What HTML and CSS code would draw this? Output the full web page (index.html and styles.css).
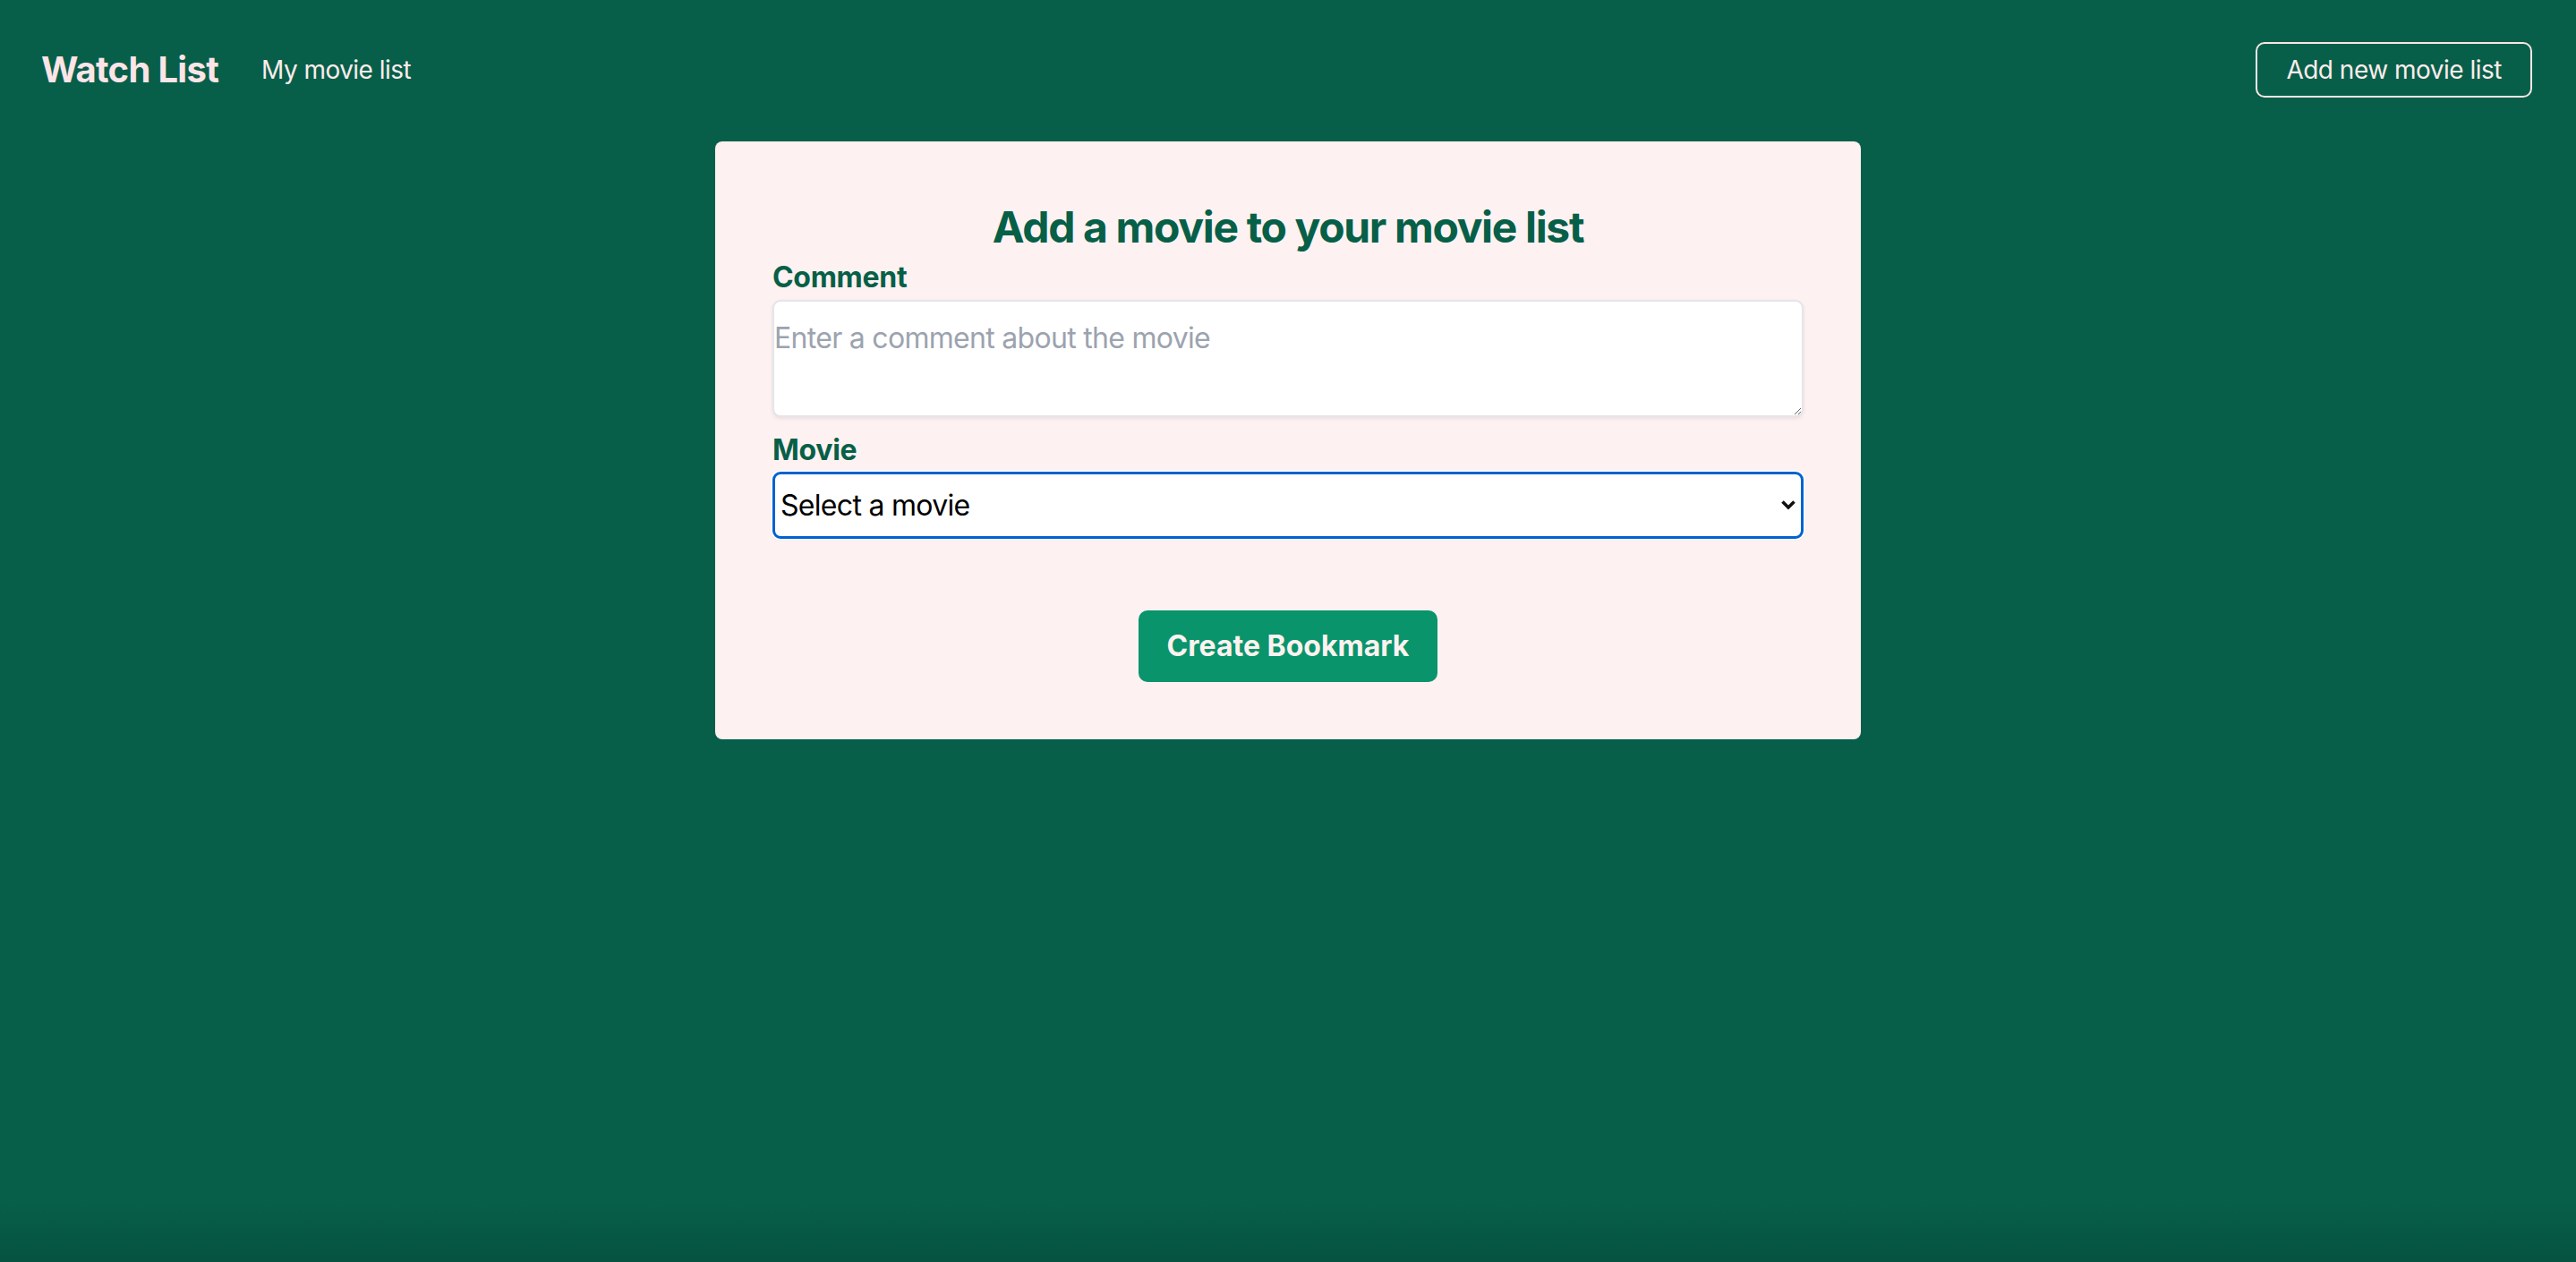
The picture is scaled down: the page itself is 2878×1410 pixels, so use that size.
FILE: index.html
```html
<!DOCTYPE html>
<html lang="en">
<head>
<meta charset="utf-8">
<title>Watch List</title>
<link rel="stylesheet" href="styles.css">
</head>
<body>
<nav class="nav">
  <div class="nav-left">
    <a class="brand" href="#">Watch List</a>
    <a class="nav-link" href="#">My movie list</a>
  </div>
  <a class="nav-btn" href="#">Add new movie list</a>
</nav>
<main class="main">
  <form class="card">
    <h1 class="title">Add a movie to your movie list</h1>
    <label class="label" for="comment">Comment</label>
    <textarea id="comment" class="textarea" placeholder="Enter a comment about the movie"></textarea>
    <label class="label label-movie" for="movie">Movie</label>
    <div class="select-wrap">
      <select id="movie" class="select">
        <option>Select a movie</option>
      </select>
      <svg class="chevron" width="18" height="13" viewBox="0 0 18 13" aria-hidden="true">
        <path d="M2.5 2.5 L9 9 L15.5 2.5" fill="none" stroke="#111" stroke-width="3.6"/>
      </svg>
    </div>
    <div class="actions">
      <button type="button" class="submit">Create Bookmark</button>
    </div>
  </form>
</main>
</body>
</html>
```

FILE: styles.css
```css
html {
  min-height: 100%;
  background: linear-gradient(to bottom, #075f4a 0, #075f4a 1340px, #055340 1410px);
}
body {
  margin: 0;
  min-height: 1410px;
  font-family: Inter, "Noto Sans", sans-serif;
  color: #fde4e4;
}
a { text-decoration: none; }

.nav {
  height: 156px;
  padding: 0 49px 0 46px;
  display: flex;
  align-items: center;
  justify-content: space-between;
  box-sizing: border-box;
}
.nav-left {
  display: flex;
  align-items: center;
  gap: 48px;
}
.brand {
  font-size: 40px;
  font-weight: 700;
  line-height: 56px;
  color: #fde4e6;
  letter-spacing: -0.7px;
}
.nav-link {
  font-size: 28px;
  line-height: 40px;
  color: #fdecea;
  letter-spacing: -0.55px;
}
.nav-btn {
  display: block;
  font-size: 28px;
  line-height: 40px;
  padding: 9px 32px;
  border: 2px solid #fbe6e4;
  border-radius: 10px;
  color: #fdecea;
  letter-spacing: -0.5px;
}

.main {
  display: flex;
  justify-content: center;
  padding-top: 2px;
}
.card {
  width: 1280px;
  box-sizing: border-box;
  background: #fdf1f1;
  border-radius: 8px;
  padding: 64px 64px 64px;
  display: flex;
  flex-direction: column;
}
.title {
  margin: 0;
  text-align: center;
  font-size: 48px;
  line-height: 64px;
  font-weight: 700;
  color: #075f47;
  letter-spacing: -1.35px;
}
.label {
  display: block;
  font-size: 32px;
  line-height: 48px;
  font-weight: 700;
  color: #075f47;
  letter-spacing: -0.3px;
}
.label-movie {
  margin-top: 13px;
}
.textarea {
  display: block;
  width: 100%;
  height: 131px;
  box-sizing: border-box;
  margin-top: 1px;
  padding: 17px 0 0 0;
  border: 2px solid #e4e5ea;
  border-radius: 9px;
  background: #fff;
  box-shadow: 0 2px 4px rgba(0, 0, 0, 0.08);
  font-family: Inter, "Noto Sans", sans-serif;
  font-size: 32px;
  line-height: 48px;
  letter-spacing: -0.7px;
  color: #111;
  outline: none;
}
.textarea::placeholder {
  color: #9ca3af;
}
.select-wrap {
  position: relative;
}
.select {
  display: block;
  width: 100%;
  height: 75px;
  box-sizing: border-box;
  -webkit-appearance: none;
  appearance: none;
  padding: 0 6px;
  border: 3px solid #0062d0;
  border-radius: 9px;
  background: #fff;
  box-shadow: 0 0 0 1.5px #fff, 0 1px 4px rgba(0, 0, 0, 0.06);
  font-family: Inter, "Noto Sans", sans-serif;
  font-size: 32px;
  letter-spacing: -0.7px;
  color: #000;
  outline: none;
}
.chevron {
  position: absolute;
  right: 8px;
  top: 31px;
  pointer-events: none;
}
.actions {
  display: flex;
  justify-content: center;
  margin-top: 80px;
}
.submit {
  font-family: Inter, "Noto Sans", sans-serif;
  font-size: 32px;
  line-height: 48px;
  font-weight: 700;
  color: #fdf2f0;
  background: #09946b;
  border: none;
  border-radius: 10px;
  padding: 16px 32px;
  cursor: pointer;
}
```
